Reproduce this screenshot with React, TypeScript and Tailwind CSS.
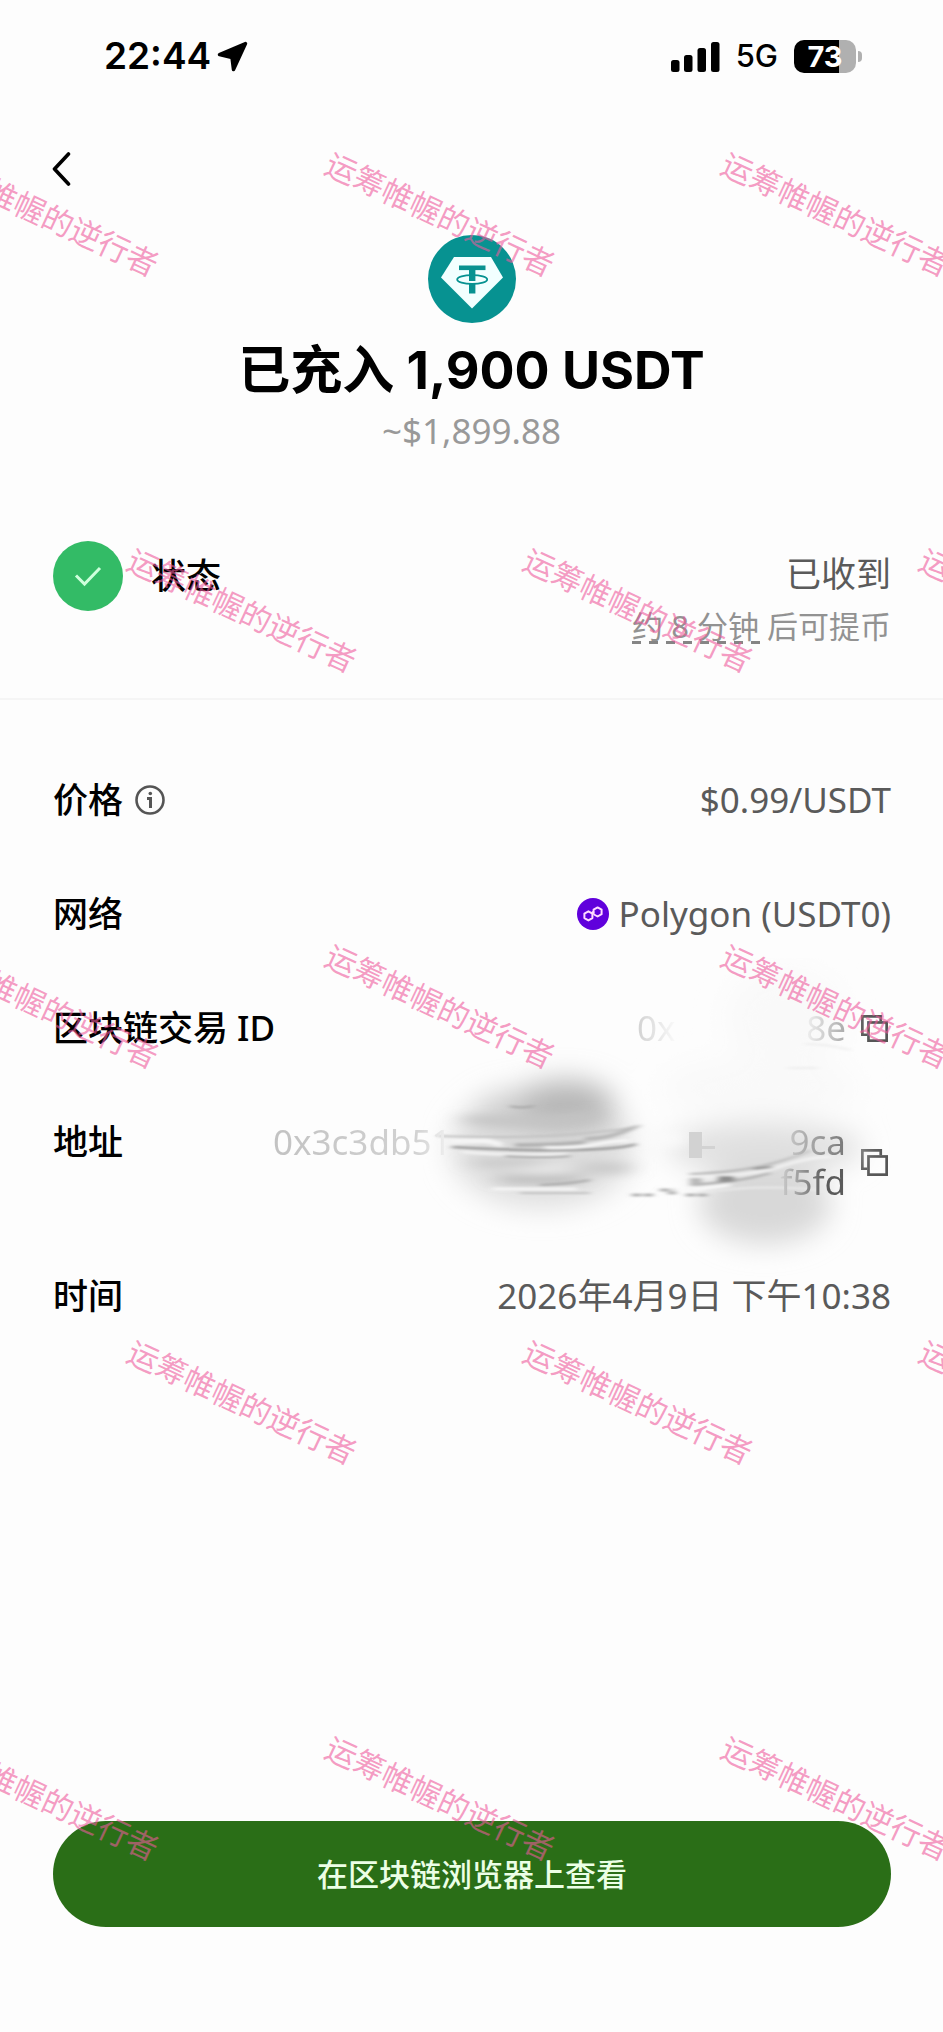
import type { ReactNode } from 'react'

const WATERMARK = '运筹帷幄的逆行者'

function WatermarkRow({ shifted }: { shifted?: boolean }) {
  return (
    <div className={shifted ? 'flex h-[396px] ml-[44px]' : 'flex h-[396px] -ml-[154px]'}>
      {[0, 1, 2].map(i => (
        <div key={i} className="w-[396px] shrink-0 flex items-center justify-center">
          <span className="rotate-25 whitespace-nowrap text-[31px] leading-[40px]">{WATERMARK}</span>
        </div>
      ))}
    </div>
  )
}

function Watermark() {
  return (
    <div
      aria-hidden="true"
      className="absolute inset-0 z-20 overflow-hidden pointer-events-none select-none pt-4 text-[#ee5a9c]/60"
    >
      <WatermarkRow />
      <WatermarkRow shifted />
      <WatermarkRow />
      <WatermarkRow shifted />
      <WatermarkRow />
    </div>
  )
}

function StatusBar() {
  return (
    <div className="h-[112px] pl-[104px] pr-[81px] flex items-center justify-between font-['Inter',sans-serif] text-black">
      <div className="flex items-center gap-1.5">
        <span className="text-[37px] leading-[40px] font-semibold">22:44</span>
        <svg width="31" height="31" viewBox="0 0 31 31" fill="currentColor" stroke="currentColor" strokeWidth="3.500" strokeLinejoin="round">
          <path d="M28.500 2.500 2.500 13.500l12.500 3 1.500 12z" />
        </svg>
      </div>
      <div className="flex items-center">
        <svg width="49" height="31" viewBox="0 0 49 31" fill="currentColor">
          <rect x="0" y="19" width="8.500" height="12" rx="2.500" />
          <rect x="13" y="14" width="8.500" height="17" rx="2.500" />
          <rect x="26.500" y="7" width="8.500" height="24" rx="2.500" />
          <rect x="40" y="1" width="8.500" height="30" rx="2.500" />
        </svg>
        <span className="ml-4 text-[31px] leading-[40px] font-medium">5G</span>
        <div className="ml-4 w-[62px] h-[33px] rounded-[10px] flex items-center justify-center bg-[linear-gradient(90deg,#000_73%,#b0b0b0_73%)]">
          <span className="text-[29px] leading-[33px] font-bold text-white">73</span>
        </div>
        <div className="ml-0.5 w-1 h-[11px] rounded-r-full bg-[#b0b0b0]" />
      </div>
    </div>
  )
}

function TetherLogo() {
  return (
    <svg width="88" height="88" viewBox="0 0 88 88">
      <circle cx="44" cy="44" r="44" fill="#079291" />
      <path d="M26 22h37l12 20.500-31 31-31-31z" fill="#f2ffff" />
      <g fill="none" stroke="#079291">
        <path d="M31 32.800h26.500" strokeWidth="4.600" />
        <path d="M44.200 32v14M44.200 49v9.500" strokeWidth="6.400" />
        <ellipse cx="44.200" cy="44.500" rx="15" ry="4.400" strokeWidth="1.800" />
      </g>
    </svg>
  )
}

function PolygonLogo() {
  return (
    <svg width="32" height="32" viewBox="0 0 32 32">
      <circle cx="16" cy="16" r="16" fill="#6000dc" />
      <g fill="none" stroke="#ffd9ff" strokeWidth="2" strokeLinejoin="round">
        <path d="M15 15.400l-3.600-2.100-4 2.300v4.500l4 2.300 4-2.300v-5.600l1.400-1" />
        <path d="M17 16.500l3.600 2 4-2.300v-4.500l-4-2.300-4 2.300v5" />
      </g>
    </svg>
  )
}

function CopyButton({ label }: { label: string }) {
  return (
    <button type="button" aria-label={label} className="shrink-0 mr-[3px] text-[#555]">
      <svg width="27" height="27" viewBox="0 0 26 26" fill="none" stroke="currentColor" strokeWidth="2.600">
        <path d="M6 19H1.300V1.300H19V6" />
        <rect x="7.200" y="7.200" width="17.500" height="17.500" />
      </svg>
    </button>
  )
}

// brush strokes that hide the middle part of the transaction id and address
function Scribble() {
  return (
    <svg
      className="absolute right-0 -top-[164px] w-[468px] h-[320px] pointer-events-none"
      viewBox="423 960 468 320"
    >
      <defs>
        <filter id="soft" x="-50%" y="-50%" width="200%" height="200%">
          <feGaussianBlur stdDeviation="14" />
        </filter>
        <filter id="mid" x="-50%" y="-50%" width="200%" height="200%">
          <feGaussianBlur stdDeviation="12 4" />
        </filter>
        <filter id="fine" x="-10%" y="-50%" width="120%" height="200%">
          <feGaussianBlur stdDeviation="3 .8" />
        </filter>
      </defs>
      <g filter="url(#soft)">
        <ellipse cx="785" cy="1020" rx="60" ry="50" fill="#f9f9f9" />
        <ellipse cx="760" cy="1090" rx="100" ry="30" fill="#f9f9f9" />
        <ellipse cx="542" cy="1150" rx="92" ry="60" fill="#dedede" />
        <ellipse cx="545" cy="1114" rx="72" ry="24" fill="#cdcdcd" />
        <ellipse cx="566" cy="1106" rx="48" ry="24" fill="#b6b6b6" />
        <ellipse cx="765" cy="1150" rx="98" ry="26" fill="#e0e0e0" />
        <ellipse cx="765" cy="1206" rx="66" ry="40" fill="#d8d8d8" />
      </g>
      <g filter="url(#mid)">
        <path d="M465 1121q60 6 130-4" stroke="#c4c4c4" strokeWidth="9" fill="none" />
        <path d="M475 1165h65" stroke="#c9c9c9" strokeWidth="9" />
        <path d="M500 1181h80" stroke="#bababa" strokeWidth="9" />
        <path d="M580 1170h48" stroke="#cbcbcb" strokeWidth="12" />
        <path d="M515 1173h50" stroke="#f0f0f0" strokeWidth="6" />
        <rect x="644" y="1133" width="40" height="16" fill="#fafafa" />
      </g>
      <path d="M689 1134h13v14h13v3h-13v9h-13z" fill="#d2d2d2" />
      <g filter="url(#fine)" fill="none">
        <path d="M438 1138q90 3 150-3t50-8" stroke="#c2c2c2" strokeWidth="2" />
        <path d="M448 1143h40l14 4" stroke="#f5f5f5" strokeWidth="5" />
        <path d="M452 1149q70 4 120 3t64-6" stroke="#9c9c9c" strokeWidth="2.500" />
        <path d="M515 1147q45 0 70-3" stroke="#b4b4b4" strokeWidth="4" />
        <path d="M545 1149.500q30 1 50-3t34-4" stroke="#f8f8f8" strokeWidth="3" />
        <path d="M585 1141q25 0 50-12" stroke="#b8b8b8" strokeWidth="4" />
        <path d="M462 1154q60 4 105 2" stroke="#f2f2f2" strokeWidth="3" />
        <path d="M505 1158q40 2 65 0" stroke="#a5a5a5" strokeWidth="2" />
        <path d="M510 1108q10 3 24 0" stroke="#a8a8a8" strokeWidth="2" />
        <path d="M540 1187q30-1 50-5" stroke="#a8a8a8" strokeWidth="2" />
        <path d="M492 1191h85" stroke="#f6f6f6" strokeWidth="3" />
        <path d="M520 1195h70" stroke="#c2c2c2" strokeWidth="2" />
        <path d="M690 1176q50-2 80-10t40-14" stroke="#b5b5b5" strokeWidth="2" />
        <path d="M692 1180q60-2 90-12t50-9" stroke="#f2f2f2" strokeWidth="3" />
        <path d="M690 1187q50-3 80-12" stroke="#acacac" strokeWidth="2" />
        <path d="M754 1171l18-2" stroke="#868686" strokeWidth="2" />
        <path d="M718 1181h16" stroke="#8e8e8e" strokeWidth="6" />
        <path d="M690 1184h12" stroke="#b8b8b8" strokeWidth="8" />
        <path d="M700 1195q60-10 130-2" stroke="#e9e9e9" strokeWidth="2" />
        <path d="M690 1192l40-5" stroke="#fafafa" strokeWidth="3" />
        <path d="M660 1192h14M668 1195h8M632 1197h24M686 1197h24" stroke="#9c9c9c" strokeWidth="2.500" strokeDasharray="9 3" />
        <path d="M805 1046q22 0 45 6M788 1070h30" stroke="#eee" strokeWidth="2" />
      </g>
    </svg>
  )
}

function Row({ label, children }: { label: ReactNode; children: ReactNode }) {
  return (
    <div className="relative flex items-start">
      <dt className="w-[220px] shrink-0 whitespace-nowrap flex items-center gap-3 text-[35px] leading-[40px] font-medium text-black">
        {label}
      </dt>
      <dd className="flex-1 flex items-center justify-end text-[35px] leading-[40px] text-[#5a5a5a]">{children}</dd>
    </div>
  )
}

export default function App() {
  return (
    <div className="relative min-h-screen flex flex-col overflow-hidden bg-[#fdfdfd] font-['Noto_Sans','Noto_Sans_CJK_SC',sans-serif]">
      <StatusBar />

      <header className="h-[123px] pt-10 px-[52px]">
        <button type="button" aria-label="返回" className="block text-black">
          <svg width="19" height="34" viewBox="0 0 19 34" fill="none" stroke="currentColor" strokeWidth="3.600" strokeLinecap="round" strokeLinejoin="round">
            <path d="M16.500 2 2.500 17l14 15" />
          </svg>
        </button>
      </header>

      <section className="flex flex-col items-center">
        <TetherLogo />
        <h1 className="mt-4 text-[52px] leading-[64px] font-bold text-black font-['Inter','Noto_Sans_CJK_SC',sans-serif]">
          已充入 1,900 USDT
        </h1>
        <p className="mt-2 text-[35px] leading-[40px] text-[#999]">~$1,899.88</p>
      </section>

      <section className="mt-[90px] pl-[53px] pr-[52px] pb-[47px] flex items-start border-b-2 border-[#f5f5f5]">
        <div className="w-[70px] h-[70px] shrink-0 rounded-full bg-[#33bb66] flex items-center justify-center">
          <svg width="28" height="21" viewBox="0 0 28 21" fill="none" stroke="#ceffdc" strokeWidth="3">
            <path d="M2 9.500l8.500 8.500L26 2" />
          </svg>
        </div>
        <h2 className="ml-7 text-[35px] leading-[70px] font-medium text-black">状态</h2>
        <div className="ml-auto pt-1.5 text-right">
          <p className="text-[35px] leading-[54px] text-[#5a5a5a]">已收到</p>
          <p className="text-[31px] leading-[50px] text-[#929292]">
            <span className="inline-block leading-[36px] whitespace-pre bg-[repeating-linear-gradient(90deg,#858585_0_9px,transparent_9px_17px)] bg-size-[100%_3px] bg-bottom bg-no-repeat">
              约 8 分钟{' '}
            </span>
            后可提币
          </p>
        </div>
      </section>

      <dl className="pl-[53px] pr-[52px] pt-20 flex flex-col gap-[74px]">
        <Row
          label={
            <>
              价格
              <button type="button" aria-label="价格说明" className="text-[#555]">
                <svg width="30" height="30" viewBox="0 0 30 30" fill="none" stroke="currentColor" strokeWidth="2.600">
                  <circle cx="15" cy="15" r="13.500" />
                  <path d="M12 13.500h3.500V23" strokeWidth="3" />
                  <circle cx="15.300" cy="8.500" r="1.800" fill="currentColor" stroke="none" />
                </svg>
              </button>
            </>
          }
        >
          $0.99/USDT
        </Row>
        <Row label="网络">
          <span className="flex items-center gap-2.5">
            <PolygonLogo />
            Polygon (USDT0)
          </span>
        </Row>
        <Row label="区块链交易 ID">
          <span className="relative z-10 w-[209px] flex justify-between mr-[15px]">
            <span className="bg-linear-to-r from-[#d2d2d2] to-[#fafafa] bg-clip-text text-transparent">0x</span>
            <span className="bg-linear-to-r from-[#f0f0f0] to-[#aaa] bg-clip-text text-transparent">8e</span>
          </span>
          <CopyButton label="复制交易 ID" />
        </Row>
        <Row label="地址">
          <Scribble />
          <span className="relative flex-1 mr-[15px]">
            <span className="flex justify-between">
              <span className="bg-linear-to-r from-[#c2c2c2] via-[#d2d2d2] via-80% to-[#f2f2f2] bg-clip-text text-transparent">
                0x3c3db51
              </span>
              <span className="bg-linear-to-r from-[#c4c4c4] to-[#777] bg-clip-text text-transparent">9ca</span>
            </span>
            <span className="flex justify-end">
              <span className="bg-linear-to-r from-[#d0d0d0] to-[#5a5a5a] to-70% bg-clip-text text-transparent">f5fd</span>
            </span>
          </span>
          <CopyButton label="复制地址" />
        </Row>
        <Row label="时间">2026年4月9日 下午10:38</Row>
      </dl>

      <div className="mt-auto pl-[53px] pr-[52px] pb-[105px]">
        <button
          type="button"
          className="w-full h-[106px] rounded-full bg-[#2a6e17] text-[31px] leading-[40px] font-medium text-[#ecffe6]"
        >
          在区块链浏览器上查看
        </button>
      </div>

      <Watermark />
    </div>
  )
}
